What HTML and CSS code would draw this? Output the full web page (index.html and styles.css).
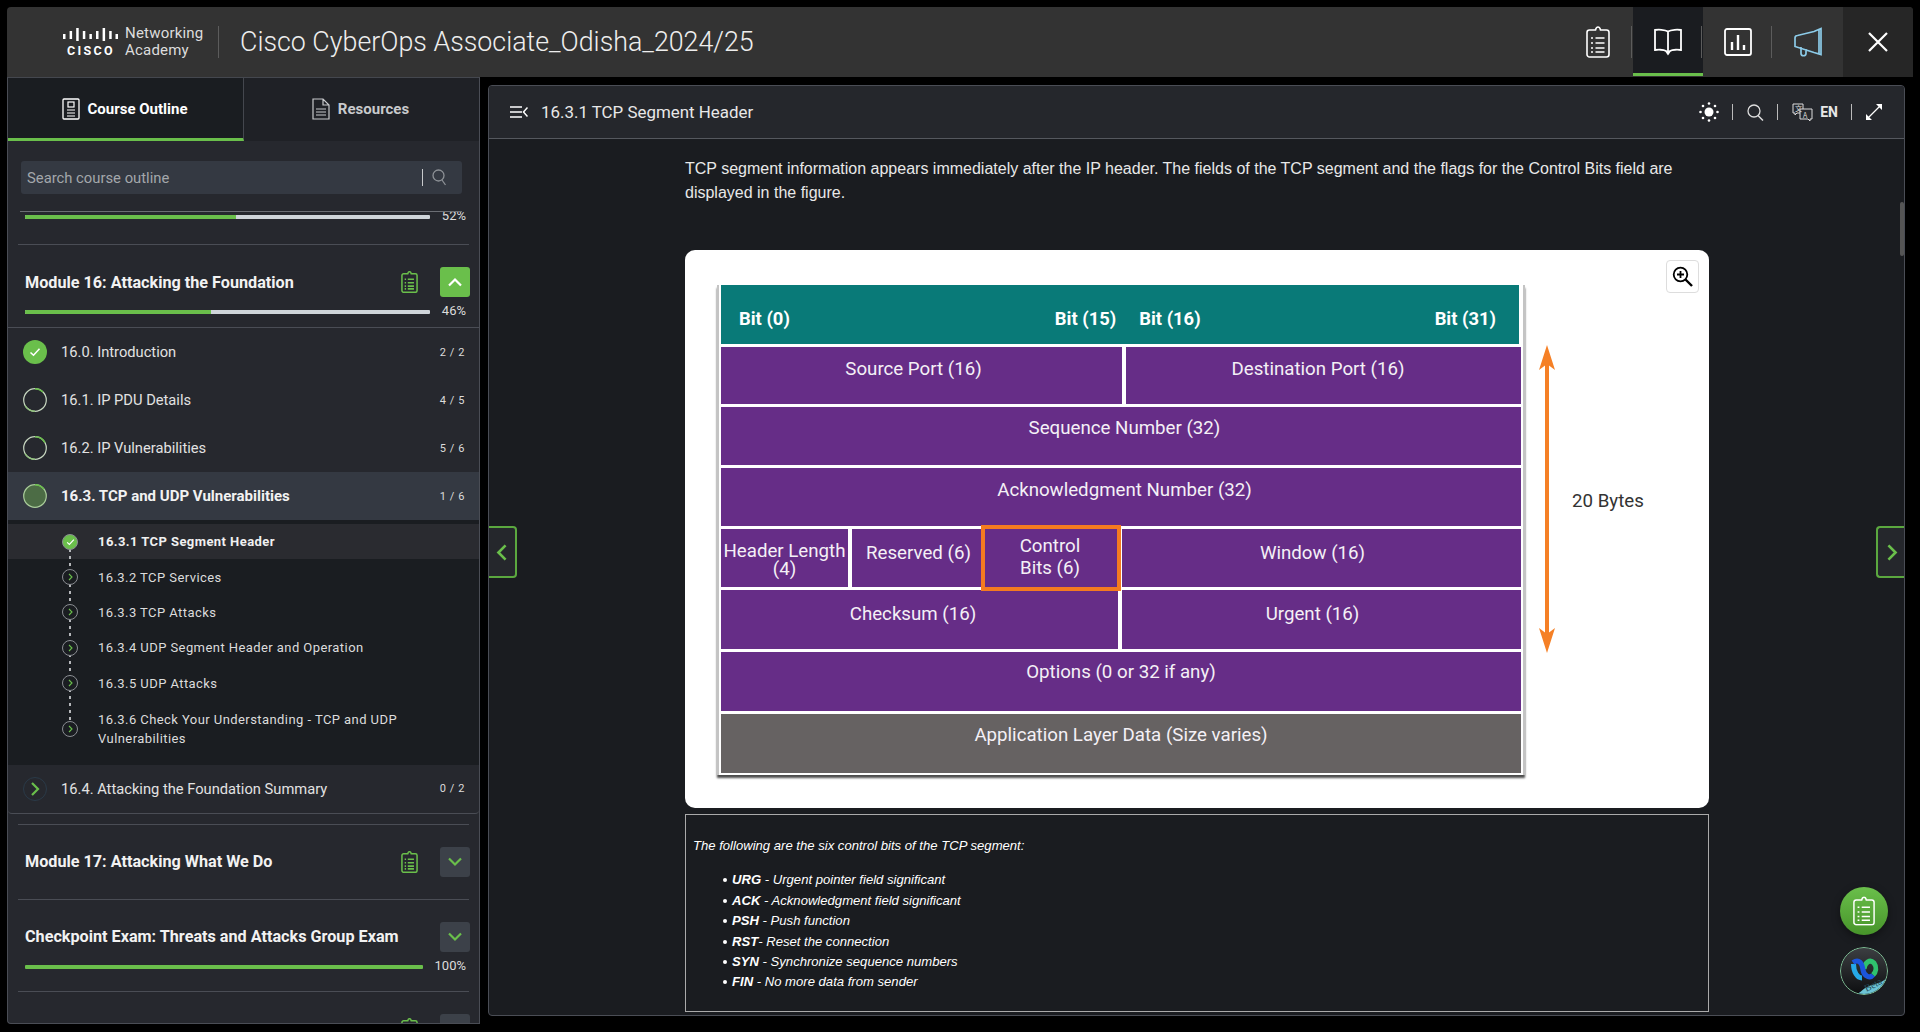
FILE: index.html
```html
<!DOCTYPE html>
<html lang="en">

<head>
    <meta charset="UTF-8">
    <meta name="viewport" content="width=device-width, initial-scale=1.0">
    <title>16.3.1 TCP Segment Header</title>
    <link rel="stylesheet" href="styles.css">
</head>

<body>
    <svg class="sprite" xmlns="http://www.w3.org/2000/svg">
        <symbol id="clipboard" viewBox="0 0 24 32">
            <path d="M8 4h1.500c.4-1.800 1.300-3 2.500-3s2.100 1.200 2.500 3H16h4.500c1.200 0 2.500 1 2.500 2.500v22c0 1.300-1.200 2.500-2.500 2.500h-17C2.200 31 1 29.800 1 28.500v-22C1 5 2.200 4 3.500 4z" fill="none" stroke="currentColor" />
            <path d="M9.500 12h9M9.500 17h9M9.500 22h9M9.500 26h9" fill="none" stroke="currentColor" />
            <path d="M5 12h2M5 17h2M5 22h2M5 26h2" fill="none" stroke="currentColor" />
        </symbol>
        <symbol id="chev-right" viewBox="0 0 10 16">
            <path d="M2 2l6 6-6 6" fill="none" stroke="currentColor" stroke-width="2.200" />
        </symbol>
        <symbol id="chev-up" viewBox="0 0 16 10">
            <path d="M2 8.500l6-6 6 6" fill="none" stroke="currentColor" stroke-width="2.200" />
        </symbol>
        <symbol id="chev-down" viewBox="0 0 16 10">
            <path d="M2 1.500l6 6 6-6" fill="none" stroke="currentColor" stroke-width="2.200" />
        </symbol>
        <symbol id="check" viewBox="0 0 12 10">
            <path d="M1.500 5.500l3 2.800 6-6.600" fill="none" stroke="currentColor" stroke-width="1.500" />
        </symbol>
    </svg>

    <div class="app">
        <header class="topbar">
            <div class="brand">
                <div class="cisco-mark">
                    <svg class="cisco-bars" viewBox="0 0 55 13" width="55" height="13">
                        <rect x="0" y="6" width="2.500" height="5" />
                        <rect x="6.600" y="3" width="2.500" height="8" />
                        <rect x="13.200" y="0" width="2.500" height="13" />
                        <rect x="19.800" y="3" width="2.500" height="8" />
                        <rect x="26.400" y="6" width="2.500" height="5" />
                        <rect x="33" y="3" width="2.500" height="8" />
                        <rect x="39.600" y="0" width="2.500" height="13" />
                        <rect x="46.200" y="3" width="2.500" height="8" />
                        <rect x="52.500" y="6" width="2.500" height="5" />
                    </svg>
                    <span class="cisco-word">CISCO</span>
                </div>
                <div class="academy">Networking<br>Academy</div>
            </div>
            <h1 class="course-title">Cisco CyberOps Associate_Odisha_2024/25</h1>
            <nav class="top-actions">
                <div class="top-btn">
                    <svg class="clip-top" width="24" height="32"><use href="#clipboard" /></svg>
                </div>
                <div class="top-btn active">
                    <svg width="30" height="28" viewBox="0 0 30 28">
                        <path d="M15 3.500C12 1.500 5 1.500 2 2v20c3-.5 9-.5 11 1l2 3 2-3c2-1.500 8-1.500 11-1V2c-3-.5-10-.5-13 1.500zM15 3.500V24" fill="none" stroke="#fff" stroke-width="1.800" />
                    </svg>
                </div>
                <div class="top-btn">
                    <svg width="28" height="28" viewBox="0 0 28 28">
                        <rect x="1" y="1" width="26" height="26" rx="2" fill="none" stroke="#fff" stroke-width="1.800" />
                        <path d="M8 14v8M14 7v15M20 17v5" stroke="#fff" stroke-width="2.400" />
                    </svg>
                </div>
                <div class="top-btn">
                    <svg width="30" height="30" viewBox="0 0 30 30">
                        <path d="M2 11c0-1.500 1-2.500 2.500-2.500L21 4.500l7-3v26l-7-2-19-6zM26 2v25M8 20v6.500c0 3 5 3 5 0V22" fill="none" stroke="#8ccbe8" stroke-width="1.700" />
                    </svg>
                </div>
                <div class="close-btn">
                    <svg width="20" height="20" viewBox="0 0 20 20">
                        <path d="M1 1l18 18M19 1L1 19" stroke="#fff" stroke-width="2.200" />
                    </svg>
                </div>
            </nav>
        </header>

        <div class="workspace">
            <aside class="sidebar">
                <div class="tabs">
                    <div class="tab active">
                        <svg width="18" height="22" viewBox="0 0 18 22">
                            <rect x="1" y="1" width="16" height="20" rx="1" fill="none" stroke="#fff" stroke-width="1.300" />
                            <rect x="6" y="4" width="6" height="5" fill="none" stroke="#fff" stroke-width="1.200" />
                            <path d="M5 12h8M5 15h8M5 18h8" stroke="#fff" stroke-width="1.200" />
                        </svg>
                        Course Outline
                    </div>
                    <div class="tab">
                        <svg width="18" height="22" viewBox="0 0 18 22">
                            <path d="M1 1h10l6 6v14H1zM11 1v6h6M4 11h10M4 14h10M4 17h10" fill="none" stroke="#c8cacc" stroke-width="1.200" />
                        </svg>
                        Resources
                    </div>
                </div>

                <div class="search">
                    <span class="search-text">Search course outline</span>
                    <span class="search-bar"></span>
                    <svg width="15" height="17" viewBox="0 0 15 17">
                        <circle cx="6.500" cy="6.500" r="5.500" fill="none" stroke="#8d9196" stroke-width="1.300" />
                        <path d="M10 11l3.500 5" stroke="#8d9196" stroke-width="1.300" />
                    </svg>
                </div>

                <div class="outline">
                    <div class="module-tail">
                        <div class="progress">
                            <div class="track"><div class="fill" style="width: 52%"></div></div>
                            <span class="pct">52%</span>
                        </div>
                    </div>

                    <section class="module open">
                        <div class="module-head">
                            <h2>Module 16: Attacking the Foundation</h2>
                            <svg class="module-exam" width="17" height="22"><use href="#clipboard" /></svg>
                            <div class="module-toggle on">
                                <svg width="16" height="10"><use href="#chev-up" /></svg>
                            </div>
                        </div>
                        <div class="progress">
                            <div class="track"><div class="fill" style="width: 46%"></div></div>
                            <span class="pct">46%</span>
                        </div>
                    </section>

                    <div class="lessons">
                        <div class="lesson">
                            <span class="lesson-dot done">
                                <svg width="12" height="10"><use href="#check" /></svg>
                            </span>
                            <span class="lesson-name">16.0. Introduction</span>
                            <span class="lesson-count">2 / 2</span>
                        </div>
                        <div class="lesson">
                            <svg class="ring" width="24" height="24" viewBox="0 0 24 24">
                                <circle cx="12" cy="12" r="11.300" fill="none" stroke="#c6d6c0" stroke-width="1.200" />
                                <path d="M12 .7a11.300 11.300 0 0 1 8 3.300" fill="none" stroke="#6abf4b" stroke-width="1.400" />
                                <path d="M2 17.500a11.300 11.300 0 0 0 10 5.800" fill="none" stroke="#8fc47a" stroke-width="1.400" />
                            </svg>
                            <span class="lesson-name">16.1. IP PDU Details</span>
                            <span class="lesson-count">4 / 5</span>
                        </div>
                        <div class="lesson">
                            <svg class="ring" width="24" height="24" viewBox="0 0 24 24">
                                <circle cx="12" cy="12" r="11.300" fill="none" stroke="#c6d6c0" stroke-width="1.200" />
                                <path d="M12 .7a11.300 11.300 0 0 1 10 6" fill="none" stroke="#6abf4b" stroke-width="1.400" />
                                <path d="M2 17.500a11.300 11.300 0 0 0 10 5.800" fill="none" stroke="#8fc47a" stroke-width="1.400" />
                            </svg>
                            <span class="lesson-name">16.2. IP Vulnerabilities</span>
                            <span class="lesson-count">5 / 6</span>
                        </div>
                        <div class="lesson current">
                            <svg class="ring" width="24" height="24" viewBox="0 0 24 24">
                                <circle cx="12" cy="12" r="11.300" fill="#4c6c45" stroke="#a9cc9a" stroke-width="1.200" />
                                <path d="M12 .7a11.300 11.300 0 0 1 9 4.500" fill="none" stroke="#6abf4b" stroke-width="1.400" />
                            </svg>
                            <span class="lesson-name">16.3. TCP and UDP Vulnerabilities</span>
                            <span class="lesson-count">1 / 6</span>
                        </div>

                        <div class="pages">
                            <div class="page active">
                                <span class="page-dot done">
                                    <svg width="9" height="8"><use href="#check" /></svg>
                                </span>
                                <span class="page-name">16.3.1 TCP Segment Header</span>
                            </div>
                            <div class="page">
                                <span class="page-dot"><svg width="5" height="8"><use href="#chev-right" /></svg></span>
                                <span class="page-name">16.3.2 TCP Services</span>
                            </div>
                            <div class="page">
                                <span class="page-dot"><svg width="5" height="8"><use href="#chev-right" /></svg></span>
                                <span class="page-name">16.3.3 TCP Attacks</span>
                            </div>
                            <div class="page">
                                <span class="page-dot"><svg width="5" height="8"><use href="#chev-right" /></svg></span>
                                <span class="page-name">16.3.4 UDP Segment Header and Operation</span>
                            </div>
                            <div class="page">
                                <span class="page-dot"><svg width="5" height="8"><use href="#chev-right" /></svg></span>
                                <span class="page-name">16.3.5 UDP Attacks</span>
                            </div>
                            <div class="page tall">
                                <span class="page-dot"><svg width="5" height="8"><use href="#chev-right" /></svg></span>
                                <span class="page-name">16.3.6 Check Your Understanding - TCP and UDP Vulnerabilities</span>
                            </div>
                        </div>

                        <div class="lesson last">
                            <span class="lesson-dot closed">
                                <svg width="10" height="16"><use href="#chev-right" /></svg>
                            </span>
                            <span class="lesson-name">16.4. Attacking the Foundation Summary</span>
                            <span class="lesson-count">0 / 2</span>
                        </div>
                    </div>

                    <section class="module">
                        <div class="module-head">
                            <h2>Module 17: Attacking What We Do</h2>
                            <svg class="module-exam" width="17" height="22"><use href="#clipboard" /></svg>
                            <div class="module-toggle">
                                <svg width="16" height="10"><use href="#chev-down" /></svg>
                            </div>
                        </div>
                    </section>

                    <section class="module">
                        <div class="module-head">
                            <h2>Checkpoint Exam: Threats and Attacks Group Exam</h2>
                            <div class="module-toggle">
                                <svg width="16" height="10"><use href="#chev-down" /></svg>
                            </div>
                        </div>
                        <div class="progress">
                            <div class="track"><div class="fill" style="width: 100%"></div></div>
                            <span class="pct">100%</span>
                        </div>
                    </section>

                    <section class="module">
                        <div class="module-head">
                            <h2></h2>
                            <svg class="module-exam" width="17" height="22"><use href="#clipboard" /></svg>
                            <div class="module-toggle">
                                <svg width="16" height="10"><use href="#chev-down" /></svg>
                            </div>
                        </div>
                    </section>
                </div>
            </aside>

            <main class="content">
                <div class="content-head">
                    <svg class="menu-icon" width="18" height="12" viewBox="0 0 18 12">
                        <path d="M0 1h12M0 6h12M0 11h12" stroke="#fff" stroke-width="1.500" />
                        <path d="M17.500 1.500L13.500 6l4 4.500" fill="none" stroke="#fff" stroke-width="1.500" />
                    </svg>
                    <span class="content-title">16.3.1 TCP Segment Header</span>
                    <div class="tools">
                        <svg class="tool" width="20" height="20" viewBox="0 0 20 20">
                            <circle cx="10" cy="10" r="4.500" fill="#fff" />
                            <g fill="#fff">
                                <circle cx="10" cy="1.500" r="1.300" /><circle cx="10" cy="18.500" r="1.300" />
                                <circle cx="1.500" cy="10" r="1.300" /><circle cx="18.500" cy="10" r="1.300" />
                                <circle cx="4" cy="4" r="1.300" /><circle cx="16" cy="4" r="1.300" />
                                <circle cx="4" cy="16" r="1.300" /><circle cx="16" cy="16" r="1.300" />
                            </g>
                        </svg>
                        <span class="tool-bar"></span>
                        <svg class="tool" width="18" height="17" viewBox="0 0 18 17">
                            <circle cx="8" cy="7" r="6" fill="none" stroke="#ddd" stroke-width="1.300" />
                            <path d="M12 11.500l5 5" stroke="#ddd" stroke-width="1.500" />
                        </svg>
                        <span class="tool-bar"></span>
                        <svg class="tool translate" width="21" height="19" viewBox="0 0 21 19">
                            <path d="M1 1h10v9H5l-2 2v-2H1z" fill="none" stroke="#ddd" stroke-width="1" />
                            <path d="M8 6h12v10h-2v2l-2-2H8z" fill="#25272c" stroke="#ddd" stroke-width="1" />
                            <text x="3" y="7.500" class="tool-glyph">文</text>
                            <text x="11" y="14.500" class="tool-glyph">A</text>
                        </svg>
                        <span class="lang">EN</span>
                        <span class="tool-bar"></span>
                        <svg class="tool" width="18" height="18" viewBox="0 0 18 18">
                            <path d="M2.500 15.500l13-13" stroke="#fff" stroke-width="1.300" />
                            <path d="M11 1h6v6zM1 11v6h6z" fill="#fff" />
                        </svg>
                    </div>
                </div>

                <div class="content-body">
                    <p class="lead">TCP segment information appears immediately after the IP header. The fields of the TCP segment and the flags for the Control Bits field are displayed in the figure.</p>

                    <div class="figure">
                        <div class="zoom-btn">
                            <svg width="21" height="21" viewBox="0 0 21 21">
                                <circle cx="8.500" cy="8.500" r="6.800" fill="none" stroke="#000" stroke-width="1.800" />
                                <path d="M8.500 5v7M5 8.500h7" stroke="#000" stroke-width="1.800" />
                                <path d="M13.500 13.500l6.500 6.500" stroke="#000" stroke-width="2.400" />
                            </svg>
                        </div>
                        <div class="diagram">
                            <div class="bits">
                                <span class="bit-0">Bit (0)</span>
                                <span class="bit-15">Bit (15)</span>
                                <span class="bit-16">Bit (16)</span>
                                <span class="bit-31">Bit (31)</span>
                            </div>
                            <div class="row">
                                <div class="cell half source">Source Port (16)</div>
                                <div class="cell half dest">Destination Port (16)</div>
                            </div>
                            <div class="row"><div class="cell wide seq shifted">Sequence Number (32)</div></div>
                            <div class="row"><div class="cell wide shifted">Acknowledgment Number (32)</div></div>
                            <div class="row flags">
                                <div class="cell hlen">Header Length<br>(4)</div>
                                <div class="cell reserved">Reserved (6)</div>
                                <div class="cell control">Control<br>Bits (6)</div>
                                <div class="cell half window low">Window (16)</div>
                            </div>
                            <div class="row">
                                <div class="cell half checksum low">Checksum (16)</div>
                                <div class="cell half urgent low">Urgent (16)</div>
                            </div>
                            <div class="row"><div class="cell wide up">Options (0 or 32 if any)</div></div>
                            <div class="row"><div class="cell wide data">Application Layer Data (Size varies)</div></div>
                        </div>
                        <div class="span-note">
                            <svg width="16" height="308" viewBox="0 0 16 308">
                                <path d="M8 10v288" stroke="#f58026" stroke-width="4" />
                                <path d="M8 0l8 25-8-6-8 6zM8 308l8-25-8 6-8-6z" fill="#f58026" />
                            </svg>
                            <span class="span-label">20 Bytes</span>
                        </div>
                    </div>

                    <div class="note">
                        <p>The following are the six control bits of the TCP segment:</p>
                        <ul>
                            <li><b>URG</b> - Urgent pointer field significant</li>
                            <li><b>ACK</b> - Acknowledgment field significant</li>
                            <li><b>PSH</b> - Push function</li>
                            <li><b>RST</b>- Reset the connection</li>
                            <li><b>SYN</b> - Synchronize sequence numbers</li>
                            <li><b>FIN</b> - No more data from sender</li>
                        </ul>
                    </div>
                </div>

                <div class="scroll-thumb"></div>
                <div class="pager prev"><svg width="12" height="19"><use href="#chev-right" /></svg></div>
                <div class="pager next"><svg width="12" height="19"><use href="#chev-right" /></svg></div>

                <div class="fab exam">
                    <svg width="22" height="30" viewBox="0 0 24 32"><use href="#clipboard" /></svg>
                </div>
                <svg class="fab webex" width="48" height="48" viewBox="0 0 48 48">
                    <defs>
                        <linearGradient id="webex-bg" x1="0" y1="0" x2="0" y2="1">
                            <stop offset="0" stop-color="#3c3f42" />
                            <stop offset="1" stop-color="#0d0e10" />
                        </linearGradient>
                        <clipPath id="webex-clip"><circle cx="24" cy="24" r="23" /></clipPath>
                    </defs>
                    <circle cx="24" cy="24" r="23.500" fill="url(#webex-bg)" stroke="#7fbf95" stroke-width="1" />
                    <path clip-path="url(#webex-clip)" d="M14 48c8-2 8-7 18-10 8-2.500 13-4 16-9v19z" fill="#6cc3d5" />
                    <path d="M13.500 17c0 8 4 14 8.500 14" fill="none" stroke="#26a9e8" stroke-width="5" />
                    <path d="M24 22c1-7 6-10 10-6 3 4 2 9-1 12" fill="none" stroke="#2fc26e" stroke-width="5" />
                    <path d="M13 15.500c6-4 9 .5 10 7.500 1 6 7 9 10 5" fill="none" stroke="#1c55dc" stroke-width="5" />
                    <text x="25" y="43" class="beta" transform="rotate(-28 30 41)">Beta</text>
                </svg>
            </main>
        </div>
    </div>
</body>

</html>
```

FILE: styles.css
```css
/* General Reset */
* {
    margin: 0;
    padding: 0;
    box-sizing: border-box;
}

body {
    font-family: 'Roboto', sans-serif;
    background: #000;
    color: #fff;
    height: 1032px;
    overflow: hidden;
}

svg {
    display: block;
    flex-shrink: 0;
}

.sprite {
    display: none;
}

.app {
    padding: 7px 7px 0;
}

/* Top bar */
.topbar {
    height: 70px;
    background: #333;
    border-radius: 4px 4px 0 0;
    display: flex;
    align-items: center;
    overflow: hidden;
}

.brand {
    display: flex;
    align-items: center;
    width: 212px;
    height: 32px;
    padding-left: 56px;
    border-right: 1px solid #5c5c5c;
}

.cisco-mark {
    width: 62px;
    display: flex;
    flex-direction: column;
    align-items: flex-start;
}

.cisco-bars {
    fill: #fff;
}

.cisco-word {
    font-size: 12.500px;
    line-height: 12px;
    font-weight: 700;
    letter-spacing: 2.300px;
    margin: 4px 0 0 4px;
}

.academy {
    font-size: 15px;
    line-height: 17px;
    color: #ddd;
    letter-spacing: .2px;
}

.course-title {
    font-size: 26.800px;
    font-weight: 300;
    color: #eee;
    margin-left: 21px;
}

.top-actions {
    margin-left: auto;
    display: flex;
    height: 70px;
}

.top-btn {
    width: 70px;
    display: flex;
    align-items: center;
    justify-content: center;
    position: relative;
}

.top-btn:not(:nth-last-child(2))::after {
    content: '';
    position: absolute;
    right: 1px;
    top: 19px;
    height: 32px;
    width: 1px;
    background: #5c5c5c;
}

.top-btn.active {
    background: #1a1c20;
    border-bottom: 3px solid #6abf4b;
    margin-bottom: 1px;
    padding-top: 4px;
}

.close-btn {
    width: 70px;
    display: flex;
    align-items: center;
    justify-content: center;
    background: #262626;
}

.clip-top {
    stroke-width: 1.600;
}

/* Layout */
.workspace {
    display: flex;
    align-items: flex-start;
    gap: 8px;
}

.sidebar {
    width: 473px;
    height: 947px;
    background: #26282e;
    border: 1px solid #4a4d55;
    border-top-color: #44474e;
    overflow: hidden;
    border-radius: 0 0 0 4px;
}

/* Sidebar tabs */
.tabs {
    display: flex;
    height: 63px;
}

.tab {
    flex: 1;
    display: flex;
    align-items: center;
    justify-content: center;
    gap: 8px;
    font-size: 15px;
    font-weight: 700;
    background: #1f2126;
    color: #c8cacc;
    padding: 1px 2px 2px 0;
}

.tab.active {
    background: #1a1d21;
    color: #fff;
    border-right: 1px solid #44474e;
    border-bottom: 3px solid #6abf4b;
    padding: 1px 2px 0 0;
}

.search {
    margin: 20px 17px 0 13px;
    height: 33px;
    background: #343942;
    border-radius: 3px;
    display: flex;
    align-items: center;
    padding: 0 15px 0 6px;
}

.search-text {
    font-size: 14.800px;
    color: #a3a7ab;
    flex: 1;
}

.search-bar {
    width: 1.500px;
    height: 17px;
    background: #c8cacc;
    margin-right: 9px;
}

/* Outline list */
.outline {
    height: 813px;
    margin-top: 17px;
    overflow: hidden;
    position: relative;
}

.outline::before {
    content: '';
    position: absolute;
    left: 12px;
    top: 0;
    width: 442px;
    height: 1px;
    background: #6b6e74;
}

.module-tail {
    height: 33px;
    margin: 0 10px;
    padding: 4px 7px 0;
}

.module {
    margin: 0 10px;
    padding: 22px 7px 22px;
    border-top: 1px solid #4a4d55;
}

.module.open {
    padding-bottom: 13px;
}

.module-head {
    display: flex;
    align-items: center;
    height: 30px;
    margin-right: -8px;
}

.module-head h2 {
    flex: 1;
    font-size: 16.200px;
    font-weight: 700;
    color: #f2f2f2;
}

.module-exam {
    color: #6abf4b;
    margin-right: 22px;
    stroke-width: 2.200;
}

.module-toggle {
    width: 30px;
    height: 30px;
    border-radius: 3px;
    background: #3c4149;
    color: #6abf4b;
    display: flex;
    align-items: center;
    justify-content: center;
}

.module-toggle.on {
    background: #6abf4b;
    color: #fff;
}

.progress {
    display: flex;
    align-items: center;
    margin-top: 13px;
    height: 4px;
}

.module-tail .progress {
    margin-top: 0;
}

.track {
    flex: 1;
    height: 4px;
    background: #cfd5da;
    border-radius: 1px;
    overflow: hidden;
}

.fill {
    height: 100%;
    background: #6abf4b;
}

.pct {
    font-size: 13px;
    color: #dcdcdc;
    margin: -2px -4px 0 12px;
    line-height: 14px;
}

/* Lessons */
.lessons {
    border-top: 1px solid #4a4d55;
    border-bottom: 1px solid #4a4d55;
    border-radius: 0 0 4px 4px;
    margin-bottom: 10px;
}

.lesson {
    height: 48px;
    display: flex;
    align-items: center;
    padding: 0 14px 0 15px;
    font-size: 14.700px;
    color: #e2e2e2;
}

.lesson.current {
    background: #343942;
    font-weight: 700;
    font-size: 15px;
    color: #f2f2f2;
}

.lesson-dot {
    width: 24px;
    height: 24px;
    border-radius: 50%;
    display: flex;
    align-items: center;
    justify-content: center;
    color: #fff;
    flex-shrink: 0;
}

.lesson-dot.done {
    background: #6abf4b;
}

.lesson-dot.closed {
    color: #6abf4b;
    border: 1px solid #2a3a48;
}

.lesson-name {
    flex: 1;
    margin-left: 14px;
}

.lesson-count {
    font-size: 11px;
    font-weight: 400;
    letter-spacing: .6px;
    color: #dcdcdc;
}

/* Pages under the open lesson */
.pages {
    background: #1a1d21;
    padding: 4px 0 8px;
    position: relative;
}

.pages::before {
    content: '';
    position: absolute;
    left: 61px;
    top: 22px;
    height: 187px;
    width: 2px;
    background: repeating-linear-gradient(#b5b7ba 0 3px, transparent 3px 7px);
}

.page {
    min-height: 35.400px;
    display: flex;
    align-items: center;
    padding-left: 54px;
    font-size: 13px;
    color: #dcdcdc;
    letter-spacing: .43px;
}

.page.active {
    background: #2a2b30;
    font-weight: 700;
    color: #f0f0f0;
}

.page.tall {
    min-height: 56px;
    line-height: 19px;
}

.page-dot {
    width: 16px;
    height: 16px;
    border-radius: 50%;
    border: 1px solid #8a8d92;
    background: #1a1d21;
    color: #6abf4b;
    display: flex;
    align-items: center;
    justify-content: center;
    flex-shrink: 0;
    position: relative;
    z-index: 1;
}

.page-dot.done {
    background: #6abf4b;
    color: #fff;
}

.page-name {
    margin-left: 20px;
    max-width: 330px;
}

/* Content */
.content {
    width: 1417px;
    height: 931px;
    margin-top: 8px;
    background: #1a1c20;
    border: 1px solid #4a4d55;
    border-radius: 4px;
    position: relative;
    overflow: hidden;
}

.content-head {
    height: 53px;
    background: #25272c;
    border-bottom: 1px solid #55585e;
    display: flex;
    align-items: center;
    padding: 0 21px;
}

.content-title {
    font-size: 16.900px;
    color: #e8e8e8;
    margin-left: 13px;
}

.tools {
    margin-left: auto;
    display: flex;
    align-items: center;
}

.tool-bar {
    width: 1px;
    height: 16px;
    background: #bbb;
    margin: 0 13px;
}

.tool-glyph {
    font-size: 7px;
    fill: #ddd;
    font-family: 'Noto Sans CJK SC', 'Roboto', sans-serif;
}

.translate {
    margin-left: 1px;
}

.lang {
    font-size: 14px;
    font-weight: 700;
    color: #e8e8e8;
    margin-left: 7px;
}

.content-body {
    padding: 18px 0 0 196px;
    width: 1220px;
}

.lead {
    font-family: 'Liberation Sans', Arial, sans-serif;
    font-size: 16px;
    line-height: 24px;
    color: #e8e8e8;
    width: 1024px;
}

.figure {
    width: 1024px;
    height: 558px;
    margin-top: 45px;
    background: #fff;
    border-radius: 10px;
    padding: 35px 0 0 32px;
    display: flex;
    align-items: flex-start;
    position: relative;
}

.zoom-btn {
    position: absolute;
    top: 10px;
    right: 10px;
    width: 33px;
    height: 33px;
    border: 1px solid #ddd;
    border-radius: 4px;
    display: flex;
    align-items: center;
    justify-content: center;
}

.diagram {
    width: 808px;
    border-left: 2px solid #c4c4c4;
    border-right: 2px solid #c4c4c4;
    padding: 0 2px 2px;
    display: grid;
    grid-template-rows: 59px 57px 58px 58px 58px 59px 59px 59px;
    row-gap: 3px;
    box-shadow: 0 3px 2px rgba(0, 0, 0, 0.7);
    font-size: 18.700px;
    color: #f4f0f6;
}

.bits {
    background: #097a78;
    color: #fff;
    font-size: 18.400px;
    font-weight: 700;
    display: flex;
    align-items: center;
    padding-left: 18px;
    padding-top: 7px;
    margin-right: 2px;
}

.bit-15 {
    margin-left: 265px;
}

.bit-16 {
    margin-left: 23px;
}

.bit-31 {
    margin-left: 234px;
}

.row {
    display: flex;
    gap: 4px;
}

.cell {
    background: #662d87;
    text-align: center;
    padding-top: 11px;
    line-height: 22px;
}

.cell.wide {
    flex: 1;
}

.cell.up {
    padding-top: 9px;
}

.cell.seq {
    padding-top: 10px;
}

.cell.shifted {
    padding-left: 7px;
}

.cell.low {
    padding-top: 13px;
}

.cell.half {
    padding-right: 16px;
}

.cell.source {
    width: 401px;
}

.cell.dest {
    width: 395px;
    padding-right: 11px;
}

.cell.hlen {
    width: 127px;
    line-height: 18px;
    padding-top: 13px;
}

.cell.reserved {
    width: 129px;
    padding: 13px 0 0 4px;
}

.cell.control {
    width: 132px;
    outline: 4px solid #f47b20;
    position: relative;
    padding: 6px 2px 0 0;
}

.cell.window {
    flex: 1;
    margin-left: 1px;
    padding-right: 18px;
}

.cell.checksum {
    width: 397px;
    padding-right: 13px;
}

.cell.urgent {
    flex: 1;
    padding-right: 18px;
}

.cell.data {
    background: #666262;
    padding-top: 10px;
}

.span-note {
    display: flex;
    align-items: center;
    height: 308px;
    margin: 60px 0 0 14px;
}

.span-label {
    font-size: 18.700px;
    color: #333;
    margin: 4px 0 0 17px;
}

.note {
    width: 1024px;
    height: 198px;
    margin-top: 6px;
    border: 1px solid #aaa;
    padding: 21px 7px 0;
    font-family: 'Liberation Sans', Arial, sans-serif;
    font-size: 13.100px;
    font-style: italic;
    line-height: 20.400px;
}

.note ul {
    margin-top: 14px;
    padding-left: 39px;
    list-style: none;
}

.note li::before {
    content: '';
    display: inline-block;
    width: 4px;
    height: 4px;
    border-radius: 50%;
    background: #fff;
    margin: 0 5px 2px -9px;
}

/* Things lying over the content */
.scroll-thumb {
    position: absolute;
    left: 1411px;
    top: 116px;
    width: 4px;
    height: 54px;
    background: #555;
    border-radius: 2px;
}

.pager {
    position: absolute;
    top: 440px;
    width: 29px;
    height: 52px;
    background: #25272c;
    border: 2px solid #5ba83f;
    color: #6abf4b;
    display: flex;
    align-items: center;
    justify-content: center;
}

.pager.prev {
    left: -1px;
    border-left: none;
    border-radius: 0 4px 4px 0;
}

.pager.prev svg {
    transform: scaleX(-1);
}

.pager.next {
    right: -1px;
    border-right: none;
    border-radius: 4px 0 0 4px;
}

.fab {
    position: absolute;
    left: 1351px;
    width: 48px;
    height: 48px;
    border-radius: 50%;
}

.fab.exam {
    top: 801px;
    background: linear-gradient(#6abf4b, #47942a);
    color: #fff;
    stroke-width: 1.600;
    display: flex;
    align-items: center;
    justify-content: center;
    box-shadow: 0 3px 8px rgba(0, 0, 0, 0.4);
}

.fab.webex {
    top: 861px;
}

.beta {
    font-family: 'Liberation Serif', serif;
    font-size: 10px;
    fill: #24505c;
}
```
